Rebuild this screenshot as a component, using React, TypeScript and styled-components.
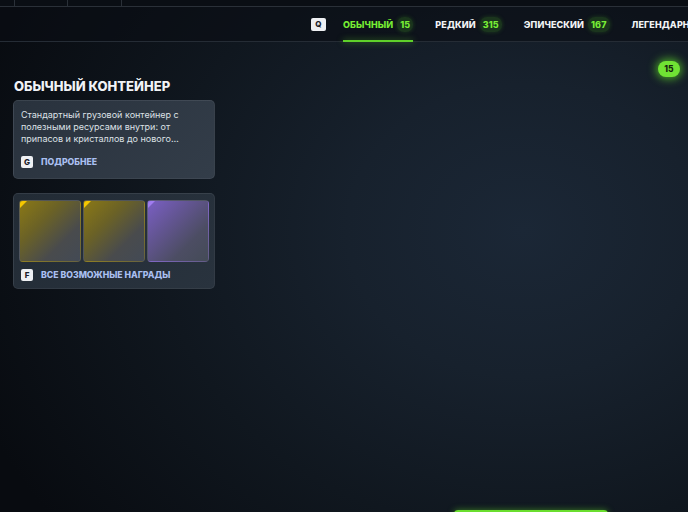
import React from 'react';
import styled, { createGlobalStyle } from 'styled-components';

const GlobalStyle = createGlobalStyle`
  html, body {
    margin: 0;
    padding: 0;
    background: #0a0e14;
  }
  * {
    box-sizing: border-box;
  }
`;

interface Rarity {
  label: string;
  count: number;
  active?: boolean;
}

const rarities: Rarity[] = [
  { label: 'Обычный', count: 15, active: true },
  { label: 'Редкий', count: 315 },
  { label: 'Эпический', count: 167 },
  { label: 'Легендарный', count: 42 },
];

const rewards = [
  { tone: 'gold' as const },
  { tone: 'gold' as const },
  { tone: 'purple' as const },
];

const Screen = styled.div`
  position: relative;
  width: 688px;
  height: 512px;
  overflow: hidden;
  display: flex;
  flex-direction: column;
  font-family: Inter, 'Noto Sans', sans-serif;
  color: #e8ecf0;
  background:
    radial-gradient(ellipse 85% 95% at 76% 45%, #1b2736 0%, #17212d 30%, #10171f 62%, #080b10 100%);
`;

const TopStrip = styled.div`
  display: flex;
  height: 7px;
  background: #0a0e14;
  border-bottom: 1px solid #2a3038;
`;

const StripCell = styled.div<{ $w: number }>`
  width: ${(p) => p.$w}px;
  border-right: 1px solid #2a3038;
`;

const NavBar = styled.nav`
  display: flex;
  align-items: stretch;
  height: 35px;
  padding-left: 311px;
  gap: 22px;
  white-space: nowrap;
  background: rgba(10, 14, 20, 0.6);
  border-bottom: 1px solid #252c35;
`;

const KeyCap = styled.span<{ $size?: number }>`
  display: inline-flex;
  align-items: center;
  justify-content: center;
  flex: none;
  width: ${(p) => p.$size ?? 12}px;
  height: ${(p) => (p.$size ? p.$size - 2 : 12)}px;
  border-radius: 2px;
  background: #eef0f3;
  color: #1b2029;
  font-size: 8px;
  font-weight: 800;
  line-height: 1;
`;

const NavKey = styled.div`
  display: flex;
  align-items: center;
  margin-right: -5px;
`;

const Tab = styled.div<{ $active?: boolean }>`
  position: relative;
  display: flex;
  align-items: center;
  gap: 4px;
  font-size: 9px;
  font-weight: 800;
  letter-spacing: 0.1px;
  text-transform: uppercase;
  color: ${(p) => (p.$active ? '#76ec33' : '#f1f3f5')};

  &::after {
    content: '';
    position: absolute;
    left: 0;
    right: 0;
    bottom: -1px;
    height: 2px;
    background: ${(p) => (p.$active ? '#5fd12a' : 'transparent')};
    box-shadow: ${(p) => (p.$active ? '0 0 6px rgba(95, 209, 42, 0.6)' : 'none')};
  }
`;

const CountPill = styled.span`
  padding: 2px 3px;
  border-radius: 7px;
  background: rgba(80, 190, 40, 0.2);
  box-shadow: 0 0 4px rgba(80, 190, 40, 0.25);
  color: #78ee35;
  font-size: 9px;
  font-weight: 800;
`;

const Main = styled.main`
  flex: 1;
  display: flex;
  padding: 36px 14px 0 13px;
`;

const SidePanel = styled.section`
  width: 202px;
  display: flex;
  flex-direction: column;
`;

const Title = styled.h1`
  margin: 0 0 6px 1px;
  font-size: 13px;
  font-weight: 800;
  line-height: 16px;
  color: #f1f3f6;
  text-transform: uppercase;
`;

const Card = styled.div<{ $dim?: boolean }>`
  border-radius: 5px;
  border: 1px solid rgba(255, 255, 255, 0.07);
  background: ${(p) =>
    p.$dim
      ? 'linear-gradient(135deg, #222b35 0%, #29333e 100%)'
      : 'linear-gradient(135deg, #29323d 0%, #333d49 100%)'};
`;

const InfoCard = styled(Card)`
  padding: 8px 8px 10px 7px;
`;

const Description = styled.p`
  margin: 0;
  width: 168px;
  font-size: 9px;
  line-height: 12px;
  color: #dde1e6;
  display: -webkit-box;
  -webkit-line-clamp: 3;
  -webkit-box-orient: vertical;
  overflow: hidden;
`;

const Action = styled.div<{ $top: number; $indent?: number }>`
  display: flex;
  align-items: center;
  gap: 8px;
  margin-top: ${(p) => p.$top}px;
  padding-left: ${(p) => p.$indent ?? 0}px;
  font-size: 8.7px;
  font-weight: 800;
  text-transform: uppercase;
  color: #a9bff0;
`;

const RewardsCard = styled(Card)`
  margin-top: 14px;
  padding: 6px 7px 7px 5px;
`;

const TileRow = styled.div`
  display: grid;
  grid-template-columns: repeat(3, 62px);
  gap: 2px;
`;

const Tile = styled.div<{ $tone: 'gold' | 'purple' }>`
  position: relative;
  height: 62px;
  border-radius: 4px;
  border: 1px solid rgba(255, 255, 255, 0.06);
  overflow: hidden;
  background: ${(p) =>
    p.$tone === 'gold'
      ? 'linear-gradient(135deg, #8a7816 0%, #6b6226 35%, #494b4d 70%, #434a55 100%)'
      : 'linear-gradient(135deg, #7a5fc4 0%, #635593 35%, #4c4d63 70%, #444b57 100%)'};

  &::before {
    content: '';
    position: absolute;
    top: 0;
    left: 0;
    border-style: solid;
    border-width: 7px 7px 0 0;
    border-color: ${(p) => (p.$tone === 'gold' ? '#f5c800' : '#a07cf0')} transparent transparent transparent;
  }
`;

const GlowBadge = styled.div`
  position: absolute;
  top: 61px;
  right: 8px;
  width: 22px;
  height: 16px;
  border-radius: 8px;
  display: flex;
  align-items: center;
  justify-content: center;
  background: #70e234;
  box-shadow: 0 0 8px 2px rgba(95, 220, 40, 0.7);
  color: #15240d;
  font-size: 8.5px;
  font-weight: 800;
`;

const BottomButton = styled.button`
  position: absolute;
  left: 454px;
  bottom: -30px;
  width: 154px;
  height: 32px;
  border: none;
  border-radius: 4px;
  background: #6ade2e;
  box-shadow: 0 0 6px rgba(95, 220, 40, 0.5);
`;

export default function App() {
  return (
    <>
      <GlobalStyle />
      <Screen>
        <TopStrip>
          <StripCell $w={15} />
          <StripCell $w={53} />
          <StripCell $w={54} />
        </TopStrip>
        <NavBar>
          <NavKey>
            <KeyCap $size={15}>Q</KeyCap>
          </NavKey>
          {rarities.map((r) => (
            <Tab key={r.label} $active={r.active}>
              {r.label}
              <CountPill>{r.count}</CountPill>
            </Tab>
          ))}
        </NavBar>
        <Main>
          <SidePanel>
            <Title>Обычный контейнер</Title>
            <InfoCard>
              <Description>
                Стандартный грузовой контейнер с полезными ресурсами внутри: от
                припасов и кристаллов до нового снаряжения для вашего отряда.
              </Description>
              <Action $top={11}>
                <KeyCap>G</KeyCap>
                Подробнее
              </Action>
            </InfoCard>
            <RewardsCard $dim>
              <TileRow>
                {rewards.map((t, i) => (
                  <Tile key={i} $tone={t.tone} />
                ))}
              </TileRow>
              <Action $top={7} $indent={2}>
                <KeyCap>F</KeyCap>
                Все возможные награды
              </Action>
            </RewardsCard>
          </SidePanel>
        </Main>
        <GlowBadge>15</GlowBadge>
        <BottomButton />
      </Screen>
    </>
  );
}
